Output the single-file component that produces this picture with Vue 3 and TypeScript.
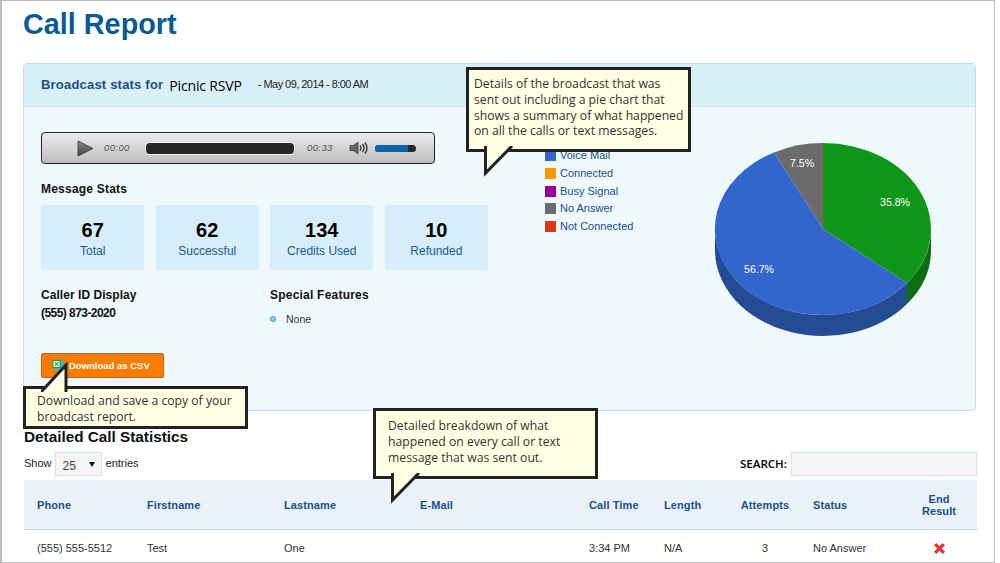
<script setup lang="ts">
const stats = [
  { value: 67, label: 'Total' },
  { value: 62, label: 'Successful' },
  { value: 134, label: 'Credits Used' },
  { value: 10, label: 'Refunded' },
]
const legend = [
  { label: 'Voice Mail', color: '#3366cc' },
  { label: 'Connected', color: '#ff9900' },
  { label: 'Busy Signal', color: '#990099' },
  { label: 'No Answer', color: '#6b6b6b' },
  { label: 'Not Connected', color: '#dc3912' },
]
const heads = ['Phone', 'Firstname', 'Lastname', 'E-Mail', 'Call Time', 'Length', 'Attempts', 'Status']
</script>

<template>
  <div class="frame">
    <h1 class="title">Call Report</h1>

    <section class="panel">
      <header class="panel-head">
        <span class="for">Broadcast stats for</span>
        <span class="name">Picnic RSVP</span>
        <span class="when">- May 09, 2014 - 8:00 AM</span>
      </header>
      <div class="panel-body">
        <div class="left">
          <div class="player">
            <svg class="play" width="17" height="17" viewBox="0 0 17 17">
              <defs>
                <linearGradient id="pg" x1="0" y1="0" x2="0" y2="1">
                  <stop offset="0" stop-color="#8a8a8a" />
                  <stop offset="1" stop-color="#444" />
                </linearGradient>
              </defs>
              <path d="M1 1 L16 8.5 L1 16 Z" fill="url(#pg)" stroke="#333" stroke-width="0.8" />
            </svg>
            <span class="time t1">00:00</span>
            <span class="track"></span>
            <span class="time t2">00:33</span>
            <svg class="spk" width="20" height="14" viewBox="0 0 20 14">
              <path d="M1 4.5 H4.5 L9 1 V13 L4.5 9.5 H1 Z" fill="#666" stroke="#333" stroke-width="0.7" />
              <path d="M11 4.5 Q13 7 11 9.5 M13.5 3 Q16.5 7 13.5 11 M16 1.5 Q20 7 16 12.5" fill="none" stroke="#333" stroke-width="1.3" />
            </svg>
            <span class="vol"><span class="vol-fill"></span></span>
          </div>

          <h3 class="label stats-label">Message Stats</h3>
          <div class="stats">
            <div v-for="s in stats" :key="s.label" class="stat">
              <strong>{{ s.value }}</strong>
              <span>{{ s.label }}</span>
            </div>
          </div>

          <div class="info">
            <div class="caller">
              <h3 class="label tight">Caller ID Display</h3>
              <p class="phone">(555) 873-2020</p>
            </div>
            <div class="features">
              <h3 class="label">Special Features</h3>
              <p class="none"><i class="dot"></i>None</p>
            </div>
          </div>

          <button class="csv">
            <svg width="12" height="13" viewBox="0 0 12 13">
              <rect x="1" y="0.5" width="10" height="10" rx="1" fill="#19c4c9" />
              <rect x="1" y="1.5" width="7" height="7" fill="#fff" stroke="#1a9a36" />
              <path d="M2.8 3 L6.2 7 M6.2 3 L2.8 7" stroke="#1a9a36" stroke-width="1.1" />
            </svg>
            Download as CSV
          </button>
        </div>

        <ul class="legend">
          <li v-for="l in legend" :key="l.label">
            <i :style="{ background: l.color }"></i>{{ l.label }}
          </li>
        </ul>

        <svg class="pie" width="226" height="210" viewBox="710 140 226 210">
          <path d="M715 229 V250 A108 86 0 0 0 907 304 V283 A108 86 0 0 1 715 229 Z" fill="#254b95" />
          <path d="M907 283 V304 A108 86 0 0 0 931 250 V229 A108 86 0 0 1 907 283 Z" fill="#0c6d12" />
          <path d="M823 229 L823 143 A108 86 0 0 1 907 283 Z" fill="#109618" />
          <path d="M823 229 L907 283 A108 86 0 1 1 774 152.4 Z" fill="#3366cc" />
          <path d="M823 229 L774 152.4 A108 86 0 0 1 823 143 Z" fill="#6b6b6b" />
          <text x="895" y="206" text-anchor="middle">35.8%</text>
          <text x="802" y="167" text-anchor="middle">7.5%</text>
          <text x="759" y="273" text-anchor="middle">56.7%</text>
        </svg>
      </div>
    </section>

    <h2 class="detail-title">Detailed Call Statistics</h2>
    <div class="controls">
      <div class="show">
        Show
        <span class="select">25<i class="caret"></i></span>
        entries
      </div>
      <div class="search">
        <span>SEARCH:</span>
        <span class="input"></span>
      </div>
    </div>

    <table class="table">
      <colgroup>
        <col style="width: 110px" />
        <col style="width: 137px" />
        <col style="width: 136px" />
        <col style="width: 169px" />
        <col style="width: 75px" />
        <col style="width: 74px" />
        <col style="width: 80px" />
        <col style="width: 96px" />
        <col style="width: 76px" />
      </colgroup>
      <thead>
        <tr>
          <th v-for="h in heads" :key="h" :class="{ center: h === 'Attempts' }">{{ h }}</th>
          <th class="center">End<br />Result</th>
        </tr>
      </thead>
      <tbody>
        <tr>
          <td>(555) 555-5512</td>
          <td>Test</td>
          <td>One</td>
          <td></td>
          <td>3:34 PM</td>
          <td>N/A</td>
          <td class="center">3</td>
          <td>No Answer</td>
          <td class="center">
            <svg width="13" height="13" viewBox="0 0 12 12">
              <path d="M2 2 L10 10 M10 2 L2 10" stroke="#ec2f36" stroke-width="3" />
            </svg>
          </td>
        </tr>
      </tbody>
    </table>

    <div class="callout c1">
      Details of the broadcast that was<br />sent out including a pie chart that<br />shows a summary of what happened<br />on all the calls or text messages.
      <svg class="tail down" width="32" height="34" viewBox="0 0 32 34">
        <path d="M1.5 0 V27 L28 0" fill="#ffffe3" stroke="#222" stroke-width="3" />
      </svg>
    </div>
    <div class="callout c2">
      Download and save a copy of your<br />broadcast report.
      <svg class="tail up" width="32" height="34" viewBox="0 0 32 34">
        <path d="M0 34 L25 7 V34" fill="#ffffe3" stroke="#222" stroke-width="3" />
      </svg>
    </div>
    <div class="callout c3">
      Detailed breakdown of what<br />happened on every call or text<br />message that was sent out.
      <svg class="tail down" width="32" height="34" viewBox="0 0 32 34">
        <path d="M1.5 0 V27 L28 0" fill="#ffffe3" stroke="#222" stroke-width="3" />
      </svg>
    </div>
  </div>
</template>

<style>
html, body { margin: 0; background: #fff; }
</style>

<style scoped>
.frame {
  position: relative;
  box-sizing: border-box;
  width: 995px;
  height: 563px;
  overflow: hidden;
  border: 1px solid #bdbdbd;
  border-left-width: 2px;
  padding-left: 21px;
  font: 12px/1.2 "Liberation Sans", Arial, sans-serif;
  color: #222;
}
.title {
  margin: 0;
  padding-top: 7px;
  height: 55px;
  box-sizing: border-box;
  font-size: 28.8px;
  line-height: 32px;
  font-weight: 700;
  color: #0a5a96;
}
.panel {
  box-sizing: border-box;
  width: 953px;
  height: 348px;
  border: 1px solid #b9e3ea;
  border-radius: 4px;
  background: #eff8fb;
  margin-top: 7px;
}
.panel-head {
  display: flex;
  align-items: center;
  height: 42px;
  padding-left: 17px;
  background: #d9f0f9;
  border-bottom: 1px solid #c5e6ef;
}
.for { font-size: 13px; font-weight: 700; color: #1a4f8a; letter-spacing: .2px; }
.name { font: 14px "Open Sans", sans-serif; color: #000; margin-left: 6px; letter-spacing: -.15px; }
.when { font-size: 11px; letter-spacing: -.55px; color: #222; margin-left: 16px; }
.panel-body { display: flex; padding: 25px 39px 0 17px; }
.left { width: 447px; flex: none; }
.player {
  box-sizing: border-box;
  display: flex;
  align-items: center;
  width: 394px;
  height: 32px;
  border: 1px solid #222;
  border-radius: 4px;
  background: linear-gradient(#ececec, #bdbdbd);
  padding-left: 35px;
}
.play { flex: none; }
.time { font-size: 9.5px; font-style: italic; color: #555; width: 25px; letter-spacing: .4px; }
.t1 { margin-left: 10px; }
.track {
  width: 148px;
  height: 11px;
  border-radius: 4px;
  background: #262626;
  margin-left: 17px;
  box-shadow: 0 0 0 1px #eee;
}
.t2 { margin-left: 13px; }
.spk { margin-left: 17px; flex: none; }
.vol {
  display: block;
  width: 41px;
  height: 7px;
  margin-left: 6px;
  border-radius: 4px;
  background: #262626;
  overflow: hidden;
}
.vol-fill { display: block; width: 33px; height: 7px; background: #0a62a8; }
.label { margin: 0; font-size: 12px; font-weight: 700; color: #111; letter-spacing: .22px; line-height: 14px; }
.label.tight { letter-spacing: .05px; }
.stats-label { margin-top: 18px; }
.stats { display: flex; gap: 11.2px; margin-top: 9px; }
.stat {
  box-sizing: border-box;
  width: 103.4px;
  height: 65px;
  background: #d7edf9;
  border-radius: 2px;
  display: flex;
  flex-direction: column;
  align-items: center;
  padding-top: 13px;
  color: #1a5a96;
}
.stat strong { font-size: 20px; line-height: 24px; color: #000; }
.stat span { margin-top: 2px; line-height: 14px; }
.info { display: flex; margin-top: 18px; }
.caller { width: 229px; }
.phone { margin: 4px 0 0; font-size: 12px; font-weight: 700; color: #111; letter-spacing: -.55px; line-height: 14px; }
.none { margin: 10px 0 0; display: flex; align-items: center; font-size: 10.5px; color: #333; line-height: 14px; }
.dot {
  box-sizing: border-box;
  width: 6px;
  height: 6px;
  border-radius: 50%;
  background: #7fd4ef;
  border: 1px solid #2d9fd8;
  margin-right: 10px;
}
.csv {
  display: flex;
  align-items: center;
  gap: 5px;
  box-sizing: border-box;
  width: 123px;
  height: 25px;
  margin-top: 27px;
  padding: 0 0 0 10px;
  border: 1px solid #e2570a;
  border-radius: 2px;
  background: #f97c00;
  color: #fff;
  font: 700 9.5px "Liberation Sans", Arial, sans-serif;
}
.legend { list-style: none; margin: 15px 0 0 57px; padding: 0; width: 165px; flex: none; }
.legend li { display: flex; align-items: center; height: 17.7px; font-size: 11px; color: #1a4f8a; }
.legend i { width: 11px; height: 11px; margin-right: 4px; }
.pie { flex: none; margin: 8px 0 0 auto; }
.pie text { fill: #fff; font: 10.5px "Liberation Sans", Arial, sans-serif; }
.detail-title {
  margin: 17px 0 0 1px;
  font-size: 15.3px;
  line-height: 18px;
  color: #111;
}
.controls {
  display: flex;
  justify-content: space-between;
  align-items: center;
  width: 953px;
  margin: 5px 0 0 1px;
  height: 25px;
}
.show { display: flex; align-items: center; gap: 3px; font-size: 11px; color: #222; }
.select {
  position: relative;
  box-sizing: border-box;
  width: 47px;
  height: 24px;
  margin-right: 1px;
  border: 1px solid #cfe4f5;
  background: #f5f5f5;
  padding: 6px 0 0 7px;
  font-size: 12px;
  color: #444;
}
.caret {
  position: absolute;
  right: 6px;
  top: 9px;
  border: 3px solid transparent;
  border-top: 5px solid #111;
}
.search { display: flex; align-items: center; gap: 4px; font: 600 11.5px "Noto Sans", sans-serif; color: #111; }
.input {
  box-sizing: border-box;
  width: 186px;
  height: 24px;
  background: #f5f5f5;
  border: 1px solid #cfe4f5;
}
.table {
  width: 953px;
  margin: 4px 0 0 1px;
  border-collapse: collapse;
  table-layout: fixed;
}
.table th {
  height: 49px;
  padding: 0 0 0 13px;
  background: #eaf2f8;
  border-bottom: 1px solid #c7d6e0;
  font-size: 11px;
  line-height: 12px;
  color: #17508f;
  letter-spacing: .1px;
  text-align: left;
}
.table th:nth-child(8) { padding-left: 8px; }
.table td { padding: 12px 0 0 13px; font-size: 11px; color: #333; vertical-align: top; }
.table td:nth-child(8) { padding-left: 8px; }
.table .center { text-align: center; padding-left: 0; }
.callout {
  position: absolute;
  box-sizing: border-box;
  width: 225px;
  border: 3px solid #222;
  background: #ffffe3;
  font: 12.2px/15.8px "Open Sans", sans-serif;
  color: #333;
}
.tail { position: absolute; display: block; }
.tail.down { top: 100%; margin-top: -3px; }
.tail.up { bottom: 100%; margin-bottom: -3px; }
.c1 { left: 464px; top: 66px; height: 85px; padding: 6px 0 0 5px; }
.c1 .tail { left: 15px; }
.c2 { left: 21px; top: 385px; height: 43px; padding: 4px 0 0 11px; }
.c2 .tail { left: 15px; }
.c3 { left: 371px; top: 407px; height: 71px; padding: 7px 0 0 12px; }
.c3 .tail { left: 15px; }
</style>
